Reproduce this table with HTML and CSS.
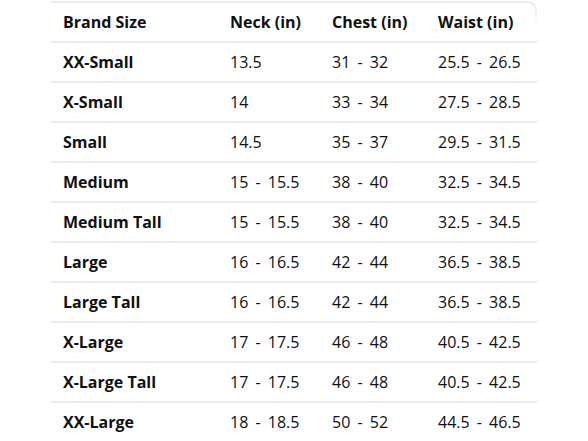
FILE: index.html
```html
<!DOCTYPE html>
<html>
<head>
<meta charset="utf-8">
<link rel="stylesheet" href="styles.css">
</head>
<body>
<div class="wrap">
<table class="sizes">
<colgroup><col class="c1"><col class="c2"><col class="c3"><col class="c4"></colgroup>
<thead>
<tr><th>Brand Size</th><th>Neck (in)</th><th>Chest (in)</th><th>Waist (in)</th></tr>
</thead>
<tbody>
<tr><th>XX-Small</th><td>13.5</td><td>31 - 32</td><td>25.5 - 26.5</td></tr>
<tr><th>X-Small</th><td>14</td><td>33 - 34</td><td>27.5 - 28.5</td></tr>
<tr><th>Small</th><td>14.5</td><td>35 - 37</td><td>29.5 - 31.5</td></tr>
<tr><th>Medium</th><td>15 - 15.5</td><td>38 - 40</td><td>32.5 - 34.5</td></tr>
<tr><th>Medium Tall</th><td>15 - 15.5</td><td>38 - 40</td><td>32.5 - 34.5</td></tr>
<tr><th>Large</th><td>16 - 16.5</td><td>42 - 44</td><td>36.5 - 38.5</td></tr>
<tr><th>Large Tall</th><td>16 - 16.5</td><td>42 - 44</td><td>36.5 - 38.5</td></tr>
<tr><th>X-Large</th><td>17 - 17.5</td><td>46 - 48</td><td>40.5 - 42.5</td></tr>
<tr><th>X-Large Tall</th><td>17 - 17.5</td><td>46 - 48</td><td>40.5 - 42.5</td></tr>
<tr><th>XX-Large</th><td>18 - 18.5</td><td>50 - 52</td><td>44.5 - 46.5</td></tr>
</tbody>
</table>
</div>
</body>
</html>
```

FILE: styles.css
```css
html, body {
  margin: 0;
  padding: 0;
  background: #ffffff;
}
body {
  font-family: "Open Sans", "Noto Sans", sans-serif;
  color: #0f1111;
}
.wrap {
  position: relative;
  width: 486px;
  margin: 1px 0 0 51px;
  padding-top: 2px;
}
.wrap::after {
  content: "";
  position: absolute;
  top: 0;
  left: 0;
  right: 0;
  height: 22px;
  box-sizing: border-box;
  border-top: 2px solid #ececec;
  border-right: 2px solid #ececec;
  border-top-right-radius: 9px;
  -webkit-mask-image: linear-gradient(to bottom, #000 35%, transparent 100%);
  mask-image: linear-gradient(to bottom, #000 35%, transparent 100%);
  pointer-events: none;
}
.sizes {
  width: 486px;
  table-layout: fixed;
  border-collapse: separate;
  border-spacing: 0;
  font-size: 16px;
}
.c1 { width: 167px; }
.c2 { width: 102px; }
.c3 { width: 106px; }
.c4 { width: 111px; }
.sizes th, .sizes td {
  height: 38px;
  padding: 0 0 0 12px;
  text-align: left;
  white-space: nowrap;
  border-bottom: 2px solid #ececec;
  line-height: 20px;
}
.sizes th { font-weight: 700; }
.sizes td { font-weight: 400; word-spacing: 3px; }
.sizes tbody tr:last-child th,
.sizes tbody tr:last-child td { border-bottom: none; }
```
